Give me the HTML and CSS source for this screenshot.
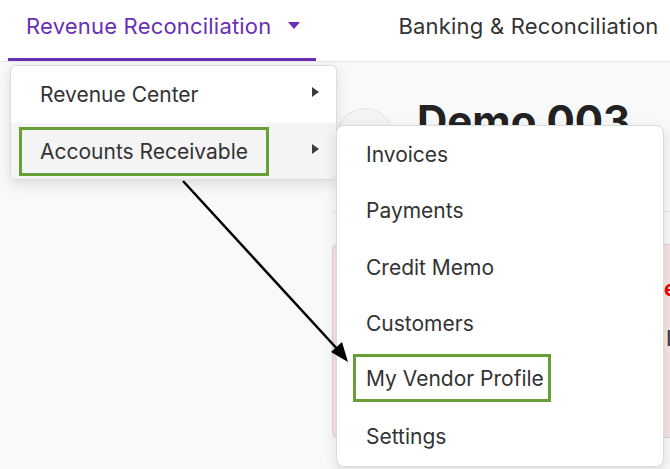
FILE: index.html
```html
<html lang="en">
<head>
  <meta charset="UTF-8">
  <title>Revenue Reconciliation</title>
  <link rel="stylesheet" href="styles.css">
</head>
<body>
  <header class="topnav">
    <div class="nav-item active">
      Revenue Reconciliation
      <span class="caret"></span>
    </div>
    <div class="nav-item">Banking &amp; Reconciliation</div>
  </header>

  <main class="page">
    <div class="content">
      <div class="title-row">
        <div class="back-btn"></div>
        <h1>Demo 003</h1>
      </div>
      <hr class="divider">
      <div class="alert">
        <p class="alert-title">exceptions</p>
        <p class="alert-text">In</p>
      </div>
    </div>
  </main>

  <ul class="menu menu-main">
    <li class="menu-item">Revenue Center <span class="arrow-right"></span></li>
    <li class="menu-item hover"><span class="mark">Accounts Receivable</span> <span class="arrow-right"></span></li>
  </ul>

  <ul class="menu menu-sub">
    <li class="menu-item">Invoices</li>
    <li class="menu-item">Payments</li>
    <li class="menu-item">Credit Memo</li>
    <li class="menu-item">Customers</li>
    <li class="menu-item"><span class="mark mark-sub">My Vendor Profile</span></li>
    <li class="menu-item">Settings</li>
  </ul>

  <svg class="pointer" width="670" height="469" viewBox="0 0 670 469">
    <line x1="183" y1="181" x2="340" y2="352" stroke="#000" stroke-width="2.5"/>
    <polygon points="348,362 331,352 342,342" fill="#000"/>
  </svg>
</body>
</html>
```

FILE: styles.css
```css
body {
  margin: 0;
  font-family: Inter, "Liberation Sans", Arial, sans-serif;
  color: #333;
  background: #f8f9fa;
  width: 670px;
  height: 469px;
  overflow: hidden;
  position: relative;
}

.topnav {
  display: flex;
  height: 61px;
  background: #fff;
  border-bottom: 1px solid #e6e7e9;
  padding-left: 8px;
  gap: 64px;
}

.nav-item {
  display: flex;
  align-items: center;
  font-size: 22px;
  letter-spacing: 0.2px;
  padding: 0 16px 6px 18px;
  height: 52px;
  border-bottom: 3px solid transparent;
  white-space: nowrap;
}

.nav-item.active {
  color: #6a2fb4;
  border-bottom-color: #6a2fb4;
}

.caret {
  margin-left: 17px;
  margin-top: -2px;
  width: 0;
  height: 0;
  border-left: 6px solid transparent;
  border-right: 6px solid transparent;
  border-top: 7px solid #6a2fb4;
}

.page {
  padding-left: 332px;
}

.title-row {
  display: flex;
  align-items: flex-start;
  gap: 24px;
  padding: 46px 0 0 5px;
  height: 64px;
}

.back-btn {
  width: 54px;
  height: 54px;
  border-radius: 50%;
  border: 1px solid #e3e3e3;
  background: #f4f4f5;
}

.title-row h1 {
  margin: -14px 0 0;
  font-size: 42px;
  line-height: 54px;
  font-weight: 700;
  color: #222;
  white-space: nowrap;
}

.divider {
  border: 0;
  border-top: 1px solid #e2e3e5;
  margin: 39px 0 0;
}

.alert {
  margin-top: 32px;
  height: 192px;
  background: #f8e4e5;
  border: 1px solid #eccfd1;
  border-right: 0;
  border-radius: 6px 0 0 6px;
  padding-left: 331px;
  white-space: nowrap;
}

.alert-title {
  margin: 31px 0 0;
  color: #e00;
  font-weight: 700;
  font-size: 21px;
}

.alert-text {
  margin: 25px 0 0 2px;
  font-size: 21px;
}

.menu {
  position: absolute;
  list-style: none;
  margin: 0;
  padding: 0;
  background: #fff;
  border: 1px solid #dcdcdc;
  box-shadow: 0 4px 14px rgba(0, 0, 0, 0.12);
  font-size: 21px;
}

.menu-main {
  left: 10px;
  top: 65px;
  width: 325px;
  border-radius: 6px;
  overflow: hidden;
}

.menu-sub {
  left: 336px;
  top: 125px;
  width: 326px;
  height: 340px;
  border-radius: 8px;
}

.menu-item {
  display: flex;
  align-items: center;
  height: 56.5px;
  padding-left: 29px;
  position: relative;
}

.menu-main .menu-item.hover {
  background: #f4f4f5;
  padding-left: 8px;
}

.arrow-right {
  position: absolute;
  right: 17px;
  top: 50%;
  margin-top: -7px;
  width: 0;
  height: 0;
  border-top: 5.5px solid transparent;
  border-bottom: 5.5px solid transparent;
  border-left: 7px solid #3c3c3c;
}

.mark {
  border: 3px solid #67a036;
  padding: 9px 18px 9px 18px;
  margin-top: 2px;
}

.menu-sub .menu-item:nth-child(5) {
  padding-left: 16px;
}

.mark-sub {
  padding: 9px 4px 8px 10px;
  margin-top: -4px;
}

.pointer {
  position: absolute;
  left: 0;
  top: 0;
  pointer-events: none;
}
```
